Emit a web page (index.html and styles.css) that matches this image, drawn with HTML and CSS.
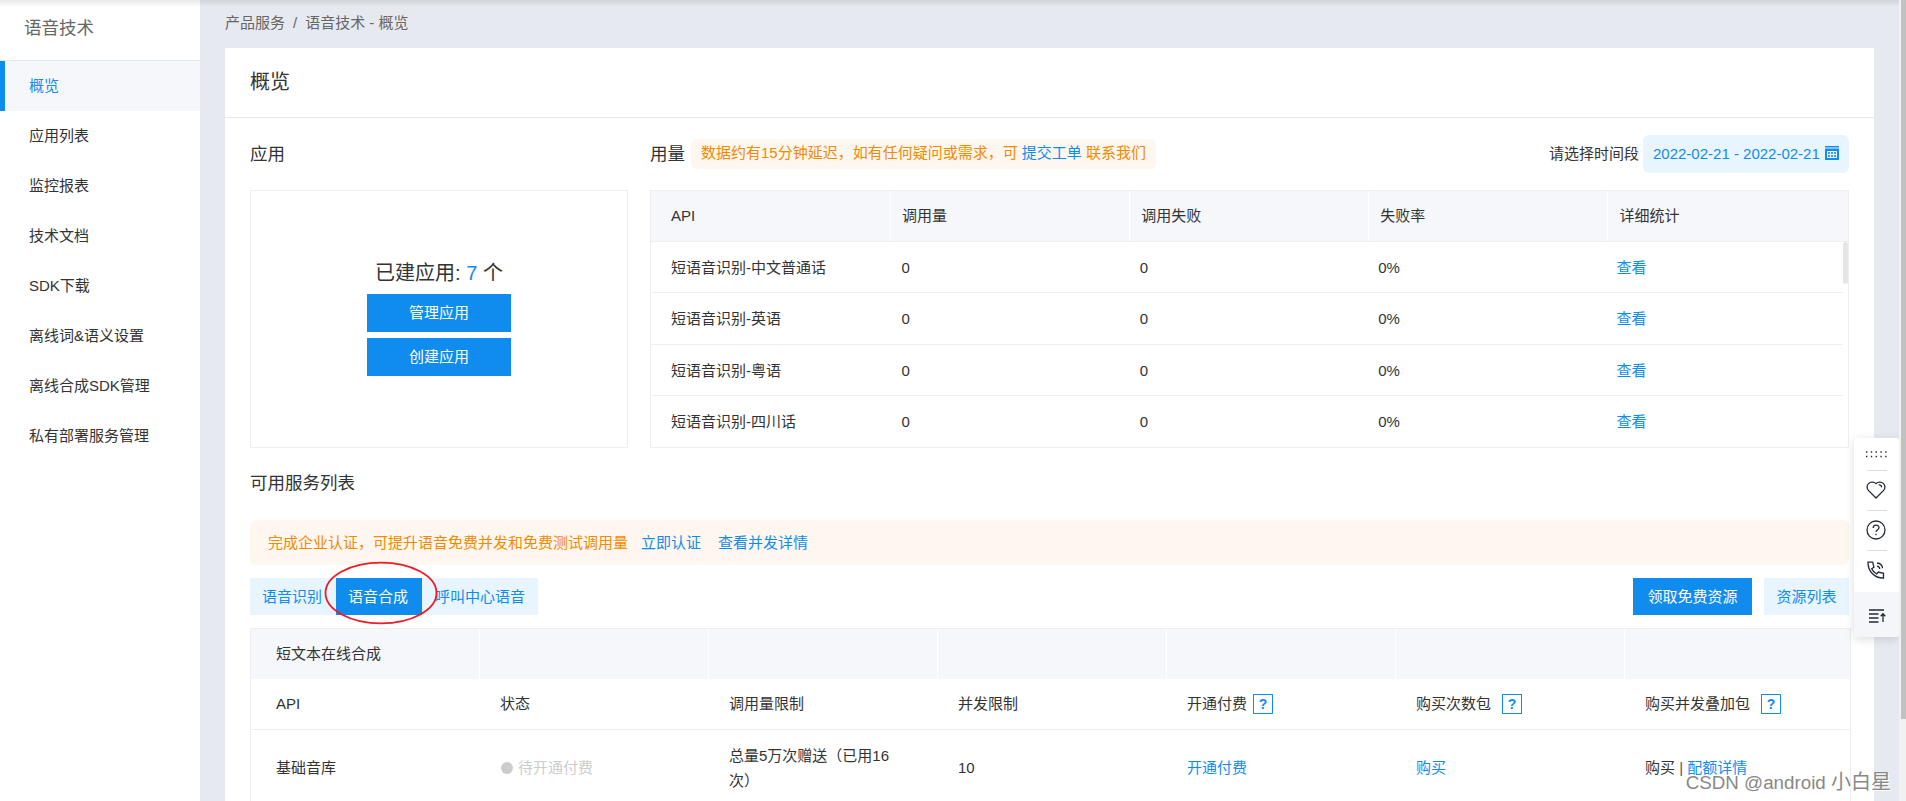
FILE: index.html
```html
<!DOCTYPE html>
<html lang="zh-CN">
<head>
<meta charset="utf-8">
<title>语音技术 - 概览</title>
<link rel="stylesheet" href="styles.css">
</head>
<body>
<div class="app">
  <nav class="sidebar">
    <div class="sidebar-title">语音技术</div>
    <a class="nav-item active">概览</a>
    <a class="nav-item">应用列表</a>
    <a class="nav-item">监控报表</a>
    <a class="nav-item">技术文档</a>
    <a class="nav-item">SDK下载</a>
    <a class="nav-item">离线词&amp;语义设置</a>
    <a class="nav-item">离线合成SDK管理</a>
    <a class="nav-item">私有部署服务管理</a>
  </nav>
  <main class="main">
    <div class="breadcrumb"><span>产品服务</span><span class="slash">/</span><span>语音技术 - 概览</span></div>
    <section class="panel">
      <h1 class="panel-title">概览</h1>
      <div class="overview">
        <div class="apps">
          <div class="block-head"><h2>应用</h2></div>
          <div class="app-card">
            <div class="app-count">已建应用: <b>7</b> 个</div>
            <button class="btn-primary wide">管理应用</button>
            <button class="btn-primary wide">创建应用</button>
          </div>
        </div>
        <div class="usage">
          <div class="block-head">
            <h2>用量</h2>
            <span class="tag">数据约有15分钟延迟，如有任何疑问或需求，可 <a>提交工单</a> 联系我们</span>
            <span class="range-label">请选择时间段</span>
            <span class="range">2022-02-21 - 2022-02-21
              <svg width="14" height="14" viewBox="0 0 14 14"><path fill="#108cee" d="M0 0h14v1.500H0zM0 3h14v11H0z"/><path fill="#84c2f6" d="M0 1.500h14V3H0z"/><path fill="#e8f5fe" d="M2 5h10v7H2z"/><path fill="#3d9ff0" d="M3 6h2v2H3zM6 6h2v2H6zM9 6h2v2H9zM3 9h2v2H3zM6 9h2v2H6zM9 9h2v2H9z"/></svg>
            </span>
          </div>
          <div class="usage-table">
            <div class="u-head"><span>API</span><span>调用量</span><span>调用失败</span><span>失败率</span><span>详细统计</span></div>
            <div class="u-body">
              <div class="u-row"><span>短语音识别-中文普通话</span><span>0</span><span>0</span><span>0%</span><a>查看</a></div>
              <div class="u-row"><span>短语音识别-英语</span><span>0</span><span>0</span><span>0%</span><a>查看</a></div>
              <div class="u-row"><span>短语音识别-粤语</span><span>0</span><span>0</span><span>0%</span><a>查看</a></div>
              <div class="u-row"><span>短语音识别-四川话</span><span>0</span><span>0</span><span>0%</span><a>查看</a></div>
            </div>
          </div>
        </div>
      </div>
      <h2 class="list-title">可用服务列表</h2>
      <div class="notice"><span>完成企业认证，可提升语音免费并发和免费测试调用量</span><a>立即认证</a><a>查看并发详情</a></div>
      <div class="toolbar">
        <div class="tabs">
          <span class="tab">语音识别</span><span class="tab on">语音合成</span><span class="tab last">呼叫中心语音</span>
          <svg class="ring" width="114" height="64" viewBox="0 0 114 64"><ellipse cx="57" cy="32" rx="55.500" ry="30.300" fill="none" stroke="#ed1c24" stroke-width="1.800"/></svg>
        </div>
        <button class="btn-primary free">领取免费资源</button>
        <button class="btn-light">资源列表</button>
      </div>
      <div class="service-table">
        <div class="s-row s-head"><span>短文本在线合成</span><span></span><span></span><span></span><span></span><span></span><span></span></div>
        <div class="s-row s-sub"><span>API</span><span>状态</span><span>调用量限制</span><span>并发限制</span><span>开通付费<i class="help near">?</i></span><span>购买次数包<i class="help">?</i></span><span>购买并发叠加包<i class="help">?</i></span></div>
        <div class="s-row s-data"><span>基础音库</span><span class="pending"><i class="dot"></i>待开通付费</span><span class="quota">总量5万次赠送（已用16次）</span><span>10</span><a>开通付费</a><a>购买</a><span>购买 <span class="bar">|</span> <a>配额详情</a></span></div>
      </div>
    </section>
  </main>
</div>
<div class="top-shade"></div>
<div class="float-bar">
  <div class="f-item grip"><svg width="21" height="7" viewBox="0 0 21 7"><path d="M0 1h21M0 5.500h21" stroke="#222a35" stroke-width="1.300" stroke-dasharray="1.400 3.400"/></svg></div>
  <div class="f-item"><svg width="20" height="20" viewBox="0 0 20 20"><path d="M10 18 2.600 10.600C.6 8.600.6 5.500 2.500 3.600 4.400 1.700 8 1.500 10 3.600c2-2.100 5.600-1.900 7.500 0s1.900 5-.1 7z"/><path d="M12.700 4.900c1.800-.3 3 .9 2.800 2.500"/></svg></div>
  <div class="f-item"><svg width="20" height="20" viewBox="0 0 20 20"><circle cx="10" cy="10" r="9"/><path d="M7.200 8c0-3.700 5.800-3.600 5.800-.3 0 2-3 2.200-3 4.400M10 13.800v1.400"/></svg></div>
  <div class="f-item phone"><svg width="20" height="20" viewBox="0 0 20 20"><path d="M2 2.200h4.700l1.200 5-2.200 1.600c1 2.300 2.700 4 5 5.200l1.600-2 5.200 1.300V18C9 18.300 1.800 11.500 2 2.200zM11 6.200c1.600.2 2.600 1.200 2.800 2.800M11 3c3.300.2 5.300 2.300 5.600 5.300"/></svg></div>
  <div class="f-item up"><svg width="18" height="14" viewBox="0 0 18 14"><path d="M1 1h15M1 5h9.500M1 9h9.500M1 13h9.500M15 13V5M12.700 7.200 15 4.700l2.300 2.500"/></svg></div>
</div>
<div class="page-scroll"><div class="page-thumb"></div></div>
<div class="watermark">CSDN @android <span>小白星</span></div>
</body>
</html>
```
FILE: styles.css
```css
* { box-sizing: border-box; }
body {
  margin: 0;
  height: 801px;
  overflow: hidden;
  position: relative;
  background: #e6eaf0;
  color: #333;
  font: 350 15px/25px "Liberation Sans", "Noto Sans CJK SC", sans-serif;
  font-weight: 400;
}
h1, h2 { margin: 0; font-weight: inherit; }
button { border: 0; padding: 0; font: inherit; }
a { color: #108cee; }
.app { display: flex; height: 801px; overflow: hidden; }
.sidebar { width: 200px; flex: none; background: #fff; }
.sidebar-title { height: 61px; padding: 16px 24px; font-size: 17.5px; color: #666; border-bottom: 1px solid #e6eaf0; }
.nav-item { display: block; height: 50px; line-height: 49px; padding-left: 29px; color: #333; }
.nav-item.active { padding-left: 24px; border-left: 5px solid #108cee; background: #f5f7fb; color: #108cee; }
.main { width: 1674px; padding-left: 25px; flex: none; }
.breadcrumb { height: 48px; line-height: 45px; color: #666; display: flex; }
.slash { margin: 0 8px; }
.panel { height: 753px; overflow: hidden; background: #fff; }
.panel-title { height: 70px; line-height: 68px; padding-left: 25px; font-size: 20px; border-bottom: 1px solid #e8e8e8; }
.overview { display: flex; gap: 22px; padding: 0 25px; }
.apps { width: 378px; }
.usage { width: 1199px; }
.block-head { height: 72px; display: flex; align-items: center; }
h2 { font-size: 17.5px; }
.tag { margin-left: 6px; height: 30px; line-height: 28px; padding: 0 10px; border-radius: 6px; background: #fdf7f0; color: #f38900; white-space: nowrap; }
.range-label { margin-left: auto; padding-bottom: 2px; }
.range { display: flex; align-items: center; justify-content: space-between; width: 206px; height: 38px; margin-left: 4px; padding: 0 10px 2px; border-radius: 6px; background: #e8f5fe; color: #108cee; }
.app-card { height: 258px; border: 1px solid #eee; display: flex; flex-direction: column; align-items: center; padding-top: 69px; }
.app-count { font-size: 20px; height: 34px; line-height: 26px; }
.app-count b { font-weight: inherit; color: #108cee; }
.btn-primary { background: #108cee; color: #fff; }
.wide { width: 144px; height: 38px; margin-bottom: 6px; padding-bottom: 2px; }
.usage-table { height: 258px; border: 1px solid #eee; position: relative; }
.u-head, .u-row { display: grid; }
.u-head { grid-template-columns: repeat(5, 239.1px); height: 51px; background: #f5f7fb; border-bottom: 1px solid #eee; line-height: 50px; }
.u-head span { padding-left: 11px; border-left: 1px solid #fff; }
.u-head span:first-child { padding-left: 20px; border-left: 0; }
.u-body { width: 1192px; }
.u-body::after { content: ""; position: absolute; right: 0; top: 51px; width: 5px; height: 42px; border-radius: 3px; background: #e6e6e6; }
.u-row { grid-template-columns: repeat(5, 238.4px); height: 51.300px; line-height: 51px; border-bottom: 1px solid #ebeef5; }
.u-row:last-child { border-bottom: 0; }
.u-row > * { padding-left: 12px; }
.u-row > :first-child { padding-left: 20px; }
.list-title { height: 72px; line-height: 71px; padding-left: 25px; }
.notice { margin: 0 25px; height: 45px; line-height: 45px; padding-left: 18px; border-radius: 6px; background: #fdf7f0; color: #f38900; display: flex; }
.notice a:nth-child(2) { margin: 0 17px 0 13px; }
.toolbar { display: flex; height: 37px; margin: 13px 25px; line-height: 37px; }
.tabs { display: flex; position: relative; margin-right: auto; background: #e8f5fe; color: #108cee; }
.tab { width: 86px; padding-left: 12px; }
.tab.on { background: #108cee; color: #fff; }
.tab.last { width: 116px; padding-left: 13px; }
.ring { position: absolute; left: 74px; top: -17px; }
.free { width: 119px; margin-right: 12px; }
.btn-light { width: 85px; background: #e8f5fe; color: #108cee; }
.service-table { width: 1601px; margin-left: 25px; border: 1px solid #eee; border-bottom: 0; height: 173px; }
.s-row { display: grid; grid-template-columns: 228px repeat(5, 229px) 1fr; align-items: center; }
.s-row > * { padding: 0 20px 0 21px; }
.s-row > :first-child { padding-left: 25px; }
.s-head { height: 50px; background: #f5f7fb; }
.s-head span { height: 50px; line-height: 50px; border-left: 1px solid #fff; }
.s-head span:first-child { border-left: 0; }
.s-sub { height: 51px; border-bottom: 1px solid #ebeef5; }
.s-sub > span { display: flex; align-items: center; padding-bottom: 2px; }
.s-data { height: 75px; }
.s-data > .quota { padding-right: 44px; word-break: break-all; }
.help { width: 20px; height: 20px; margin: 2px 0 0 11px; border: 1px solid #108cee; color: #108cee; font: bold 14px/18px "Liberation Sans", sans-serif; text-align: center; }
.help.near { margin-left: 6px; }
.bar { color: #555; }
.pending { color: #ccc; display: flex; align-items: center; }
.pending.pending { padding-left: 22px; }
.dot { width: 12px; height: 12px; margin-right: 5px; border-radius: 50%; background: #ccc; }
.top-shade { position: absolute; left: 0; top: 0; width: 1899px; height: 7px; background: linear-gradient(rgba(0,0,0,.09), rgba(0,0,0,0)); }
.float-bar { position: absolute; left: 1854px; top: 438px; width: 45px; background: #fff; border-radius: 3px; box-shadow: 0 2px 10px rgba(0,0,0,.14); }
.f-item { height: 40px; padding: 0 1px 2px 0; display: flex; align-items: center; justify-content: center; position: relative; fill: none; stroke: #222a35; stroke-width: 1.300; }
.f-item::after { content: ""; position: absolute; left: 13px; bottom: 0; width: 20px; height: 1px; background: #dcdcdc; }
.grip { height: 33px; padding: 0; }
.phone { height: 41px; padding-bottom: 4px; }
.phone::after, .up::after { display: none; }
.up { height: 45px; background: #f5f6f9; border-radius: 0 0 3px 3px; padding: 2px 0 0; }
.page-scroll { position: absolute; right: 0; top: 0; width: 7px; height: 801px; background: #f1f1f1; }
.page-thumb { width: 5px; height: 719px; margin-left: 2px; background: #c1c1c1; }
.watermark { position: absolute; right: 15px; top: 767px; font-size: 18.800px; line-height: 30px; color: #888; white-space: nowrap; text-shadow: 1px 1px 0 #fff; }
.watermark span { font-size: 20px; }
```
